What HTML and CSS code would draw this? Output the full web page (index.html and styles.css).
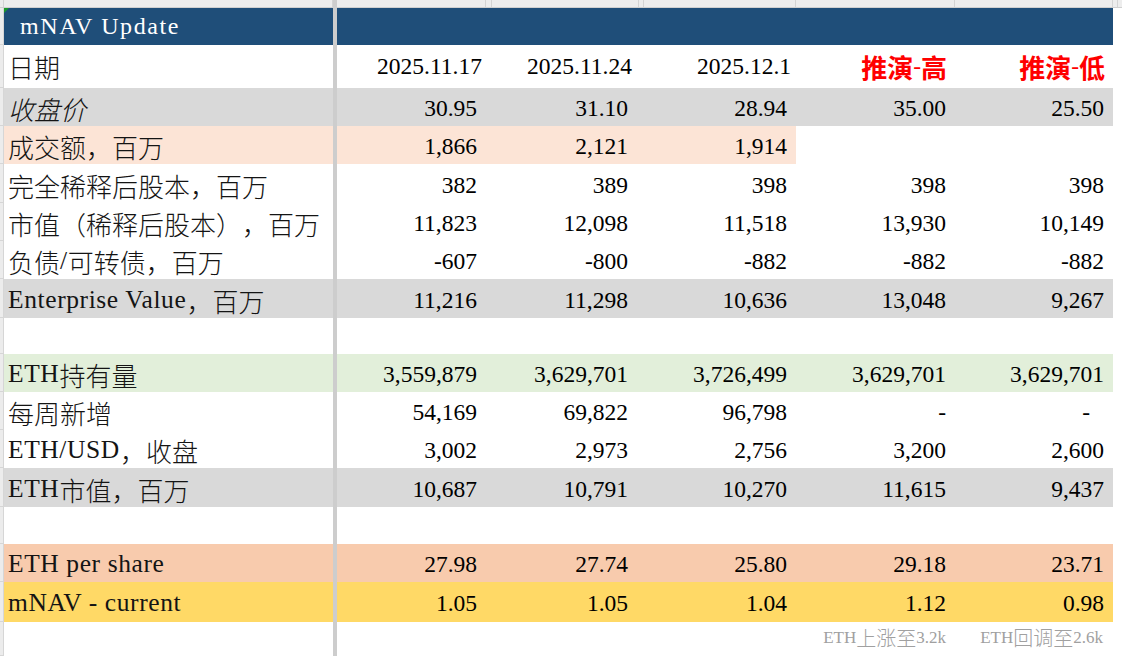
FILE: index.html
```html
<!DOCTYPE html>
<html lang="zh">
<head>
<meta charset="utf-8">
<title>mNAV Update</title>
<link rel="stylesheet" href="styles.css">
</head>
<body>
<div class="sheet">
  <div class="colbar">
    <span class="cb-g"></span><span class="cb-a"></span><span class="cb-f"></span><span class="cb-b"></span><span class="cb-x"></span><span class="cb-c"></span><span class="cb-y"></span><span class="cb-d"></span><span class="cb-e"></span><span class="cb-ff"></span><span class="cb-z"></span><span class="cb-r"></span>
  </div>
  <div class="rows">
    <div class="row hdr">
      <div class="gut"></div>
      <div class="a title"><span class="tri"></span><span class="t">mNAV Update</span></div>
      <div class="fz"></div>
      <div class="n"></div><div class="n"></div><div class="n"></div><div class="n"></div><div class="n"></div>
    </div>
    <div class="row dates">
      <div class="gut"></div>
      <div class="a"><span class="t"><span class="cj">日期</span></span></div>
      <div class="fz"></div>
      <div class="n">2025.11.17</div><div class="n">2025.11.24</div><div class="n">2025.12.1</div>
      <div class="n red"><span class="t"><span class="cj">推演</span>-<span class="cj">高</span></span></div>
      <div class="n red"><span class="t"><span class="cj">推演</span>-<span class="cj">低</span></span></div>
    </div>
    <div class="row gray">
      <div class="gut"></div>
      <div class="a"><span class="t"><span class="cj it">收盘价</span></span></div>
      <div class="fz"></div>
      <div class="n">30.95</div><div class="n">31.10</div><div class="n">28.94</div><div class="n">35.00</div><div class="n">25.50</div>
    </div>
    <div class="row peach">
      <div class="gut"></div>
      <div class="a"><span class="t"><span class="cj">成交额，百万</span></span></div>
      <div class="fz"></div>
      <div class="n">1,866</div><div class="n">2,121</div><div class="n">1,914</div><div class="n w"></div><div class="n w"></div>
    </div>
    <div class="row">
      <div class="gut"></div>
      <div class="a"><span class="t"><span class="cj">完全稀释后股本，百万</span></span></div>
      <div class="fz"></div>
      <div class="n">382</div><div class="n">389</div><div class="n">398</div><div class="n">398</div><div class="n">398</div>
    </div>
    <div class="row">
      <div class="gut"></div>
      <div class="a"><span class="t"><span class="cj">市值（稀释后股本），百万</span></span></div>
      <div class="fz"></div>
      <div class="n">11,823</div><div class="n">12,098</div><div class="n">11,518</div><div class="n">13,930</div><div class="n">10,149</div>
    </div>
    <div class="row">
      <div class="gut"></div>
      <div class="a"><span class="t"><span class="cj">负债</span>/<span class="cj">可转债，百万</span></span></div>
      <div class="fz"></div>
      <div class="n">-607</div><div class="n">-800</div><div class="n">-882</div><div class="n">-882</div><div class="n">-882</div>
    </div>
    <div class="row gray">
      <div class="gut"></div>
      <div class="a"><span class="t">Enterprise Value<span class="cj">，百万</span></span></div>
      <div class="fz"></div>
      <div class="n">11,216</div><div class="n">11,298</div><div class="n">10,636</div><div class="n">13,048</div><div class="n">9,267</div>
    </div>
    <div class="row">
      <div class="gut"></div>
      <div class="a"></div>
      <div class="fz"></div>
      <div class="n"></div><div class="n"></div><div class="n"></div><div class="n"></div><div class="n"></div>
    </div>
    <div class="row green">
      <div class="gut"></div>
      <div class="a"><span class="t">ETH<span class="cj">持有量</span></span></div>
      <div class="fz"></div>
      <div class="n">3,559,879</div><div class="n">3,629,701</div><div class="n">3,726,499</div><div class="n">3,629,701</div><div class="n">3,629,701</div>
    </div>
    <div class="row">
      <div class="gut"></div>
      <div class="a"><span class="t"><span class="cj">每周新增</span></span></div>
      <div class="fz"></div>
      <div class="n">54,169</div><div class="n">69,822</div><div class="n">96,798</div><div class="n">-</div><div class="n dash">-</div>
    </div>
    <div class="row">
      <div class="gut"></div>
      <div class="a"><span class="t">ETH/USD<span class="cj">，收盘</span></span></div>
      <div class="fz"></div>
      <div class="n">3,002</div><div class="n">2,973</div><div class="n">2,756</div><div class="n">3,200</div><div class="n">2,600</div>
    </div>
    <div class="row gray">
      <div class="gut"></div>
      <div class="a"><span class="t">ETH<span class="cj">市值，百万</span></span></div>
      <div class="fz"></div>
      <div class="n">10,687</div><div class="n">10,791</div><div class="n">10,270</div><div class="n">11,615</div><div class="n">9,437</div>
    </div>
    <div class="row">
      <div class="gut"></div>
      <div class="a"></div>
      <div class="fz"></div>
      <div class="n"></div><div class="n"></div><div class="n"></div><div class="n"></div><div class="n"></div>
    </div>
    <div class="row orange">
      <div class="gut"></div>
      <div class="a"><span class="t">ETH per share</span></div>
      <div class="fz"></div>
      <div class="n">27.98</div><div class="n">27.74</div><div class="n">25.80</div><div class="n">29.18</div><div class="n">23.71</div>
    </div>
    <div class="row yellow">
      <div class="gut"></div>
      <div class="a"><span class="t">mNAV - current</span></div>
      <div class="fz"></div>
      <div class="n">1.05</div><div class="n">1.05</div><div class="n">1.04</div><div class="n">1.12</div><div class="n">0.98</div>
    </div>
    <div class="row foot">
      <div class="gut"></div>
      <div class="a"></div>
      <div class="fz"></div>
      <div class="n"></div><div class="n"></div><div class="n"></div>
      <div class="n fn"><span class="t">ETH<span class="cj">上涨至</span>3.2k</span></div>
      <div class="n fn"><span class="t">ETH<span class="cj">回调至</span>2.6k</span></div>
    </div>
  </div>
</div>
</body>
</html>
```
FILE: styles.css
```css
html, body {
  margin: 0;
  padding: 0;
  background: #ffffff;
}
body {
  font-family: "Liberation Serif", "Noto Sans CJK SC", serif;
  color: #000000;
  text-spacing-trim: space-all;
}
.sheet {
  width: 1122px;
  height: 656px;
  overflow: hidden;
  background: #ffffff;
}

/* top column-header strip */
.colbar {
  display: flex;
  height: 8px;
  box-sizing: border-box;
  background: #ededed;
  border-bottom: 1px solid #d0d0d0;
}
.colbar span {
  box-sizing: border-box;
  height: 100%;
  border-right: 1px solid #d4d4d4;
  flex: none;
}
.cb-g { width: 4px; }
.cb-a { width: 329px; }
.colbar .cb-f { width: 4px; background: #cdcdcd; border-right: none; }
.cb-b { width: 149px; }
.cb-x { width: 6px; }
.cb-c { width: 147px; }
.cb-y { width: 5px; }
.cb-d { width: 152px; }
.cb-e { width: 159px; }
.cb-ff { width: 158px; }
.cb-z { width: 5px; }
.colbar .cb-r { flex: 1; border-right: none; }

/* body rows */
.rows {
  display: grid;
  grid-template-rows: 37px 43px 38px 38px 39px 38px 38px 39px 36px 38px 38px 38px 39px 37px 38px 40px 34px;
}
.row {
  display: grid;
  grid-template-columns: 4px 329px 4px 155px 152px 152px 159px 158px;
  width: 1113px;
}
.gut {
  box-sizing: border-box;
  background: #ececec;
  border-right: 1px solid #d6d6d6;
  border-bottom: 1px solid #d6d6d6;
}
.fz {
  background: #cdcdcd;
}

.a {
  display: flex;
  align-items: flex-end;
  padding: 0 0 3px 4px;
  font-size: 25.5px;
  line-height: 30px;
  letter-spacing: 0.6px;
  white-space: nowrap;
  color: #141414;
}
.t {
  display: block;
}
.cj {
  font-family: "Noto Sans CJK SC", sans-serif;
  font-size: 26px;
  font-weight: 300;
  letter-spacing: 0;
  line-height: 0;
  vertical-align: -4px;
  text-spacing-trim: space-all;
}
.it { font-style: italic; }

.n {
  display: flex;
  align-items: flex-end;
  justify-content: flex-end;
  padding-bottom: 5px;
  font-size: 23.5px;
  line-height: 26px;
  white-space: nowrap;
}
.row > .n:nth-child(4) { padding-right: 15px; }
.row > .n:nth-child(5) { padding-right: 16px; }
.row > .n:nth-child(6) { padding-right: 9px; }
.row > .n:nth-child(7) { padding-right: 9px; }
.row > .n:nth-child(8) { padding-right: 9px; }
.row > .n.dash { padding-right: 23px; }

/* header */
.hdr { background: #1f4e79; }
.hdr .a {
  position: relative;
  padding: 0 0 4px 16px;
  font-size: 24px;
  letter-spacing: 1.6px;
  color: #ffffff;
}
.tri {
  position: absolute;
  left: 0;
  top: 0;
  width: 0;
  height: 0;
  border-top: 5px solid #1a9a2a;
  border-right: 5px solid transparent;
}

/* dates row */
.dates .a { padding-bottom: 7px; }
.dates .n { padding-bottom: 9px; }
.dates > .n:nth-child(4) { padding-right: 10px; }
.dates > .n:nth-child(5) { padding-right: 12px; }
.dates > .n:nth-child(6) { padding-right: 5px; }
.dates > .n:nth-child(7) { padding-right: 8px; }
.dates > .n:nth-child(8) { padding-right: 8px; }
.red {
  color: #ff0000;
}
.red .cj {
  font-weight: 700;
}

/* fills */
.gray { background: #d9d9d9; }
.peach { background: #fce4d6; }
.peach .w { background: #ffffff; }
.green { background: #e2efda; }
.orange { background: #f8cbad; }
.yellow { background: #ffd966; }
.yellow .a { padding-bottom: 4px; }
.yellow .n { padding-bottom: 6px; }

/* footnote */
.fn {
  font-size: 17px;
  line-height: 22px;
  padding-bottom: 7px;
  color: #a0a0a0;
}
.fn .cj {
  font-size: 20px;
  vertical-align: -3px;
}
.row > .n.fn:nth-child(8) { padding-right: 10px; }
```
